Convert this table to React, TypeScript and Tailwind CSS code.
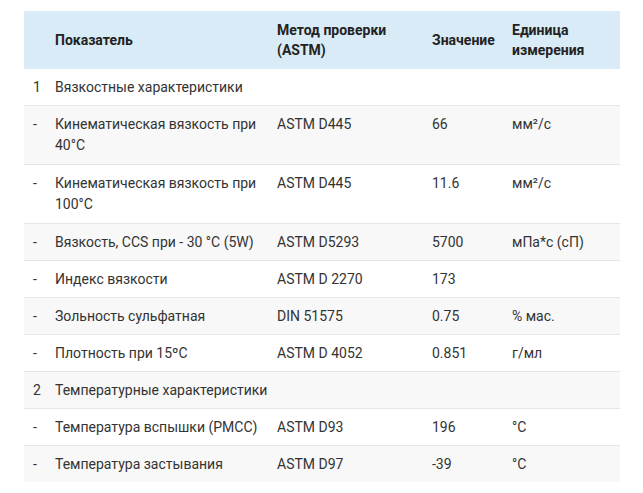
const rows: { n: string; name: string; method?: string; value?: string; unit?: string; group?: boolean; tall?: boolean }[] = [
  { n: '1', name: 'Вязкостные характеристики', group: true },
  { n: '-', name: 'Кинематическая вязкость при 40°C', method: 'ASTM D445', value: '66', unit: 'мм²/с', tall: true },
  { n: '-', name: 'Кинематическая вязкость при 100°C', method: 'ASTM D445', value: '11.6', unit: 'мм²/с', tall: true },
  { n: '-', name: 'Вязкость, CCS при - 30 °C (5W)', method: 'ASTM D5293', value: '5700', unit: 'мПа*с (сП)' },
  { n: '-', name: 'Индекс вязкости', method: 'ASTM D 2270', value: '173', unit: '' },
  { n: '-', name: 'Зольность сульфатная', method: 'DIN 51575', value: '0.75', unit: '% мас.' },
  { n: '-', name: 'Плотность при 15ºC', method: 'ASTM D 4052', value: '0.851', unit: 'г/мл' },
  { n: '2', name: 'Температурные характеристики', group: true },
  { n: '-', name: 'Температура вспышки (PMCC)', method: 'ASTM D93', value: '196', unit: '°C' },
  { n: '-', name: 'Температура застывания', method: 'ASTM D97', value: '-39', unit: '°C' },
]

export default function App() {
  return (
    <div className="min-h-screen bg-white pt-[11px] pl-6" style={{ fontFamily: 'Roboto, "Noto Sans", sans-serif' }}>
      <table className="w-[596px] table-fixed border-collapse text-[14px] leading-5 text-[#333]">
        <colgroup>
          <col className="w-[23px]" />
          <col className="w-[222px]" />
          <col className="w-[155px]" />
          <col className="w-[80px]" />
          <col className="w-[116px]" />
        </colgroup>
        <thead>
          <tr className="bg-[#d9ebf6] font-bold text-[#222]">
            <th className="h-[58px]"></th>
            <th className="px-2 text-left align-middle">Показатель</th>
            <th className="px-2 text-left align-middle">Метод проверки (ASTM)</th>
            <th className="px-2 text-left align-middle">Значение</th>
            <th className="px-2 text-left align-middle">Единица измерения</th>
          </tr>
        </thead>
        <tbody>
          {rows.map((r, i) => (
            <tr
              key={i}
              className={`${i % 2 === 1 ? 'bg-[#f8f8f8]' : 'bg-white'} ${i > 0 ? 'border-t border-[#e6e6e6]' : ''} ${r.tall ? 'leading-[21px]' : ''}`}
            >
              <td className="py-2 pl-[9px] align-top">{r.n}</td>
              {r.group ? (
                <td colSpan={4} className="px-2 py-2 align-top">{r.name}</td>
              ) : (
                <>
                  <td className="px-2 py-2 align-top">{r.name}</td>
                  <td className="px-2 py-2 align-top">{r.method}</td>
                  <td className="px-2 py-2 align-top">{r.value}</td>
                  <td className="px-2 py-2 align-top">{r.unit}</td>
                </>
              )}
            </tr>
          ))}
        </tbody>
      </table>
    </div>
  )
}
